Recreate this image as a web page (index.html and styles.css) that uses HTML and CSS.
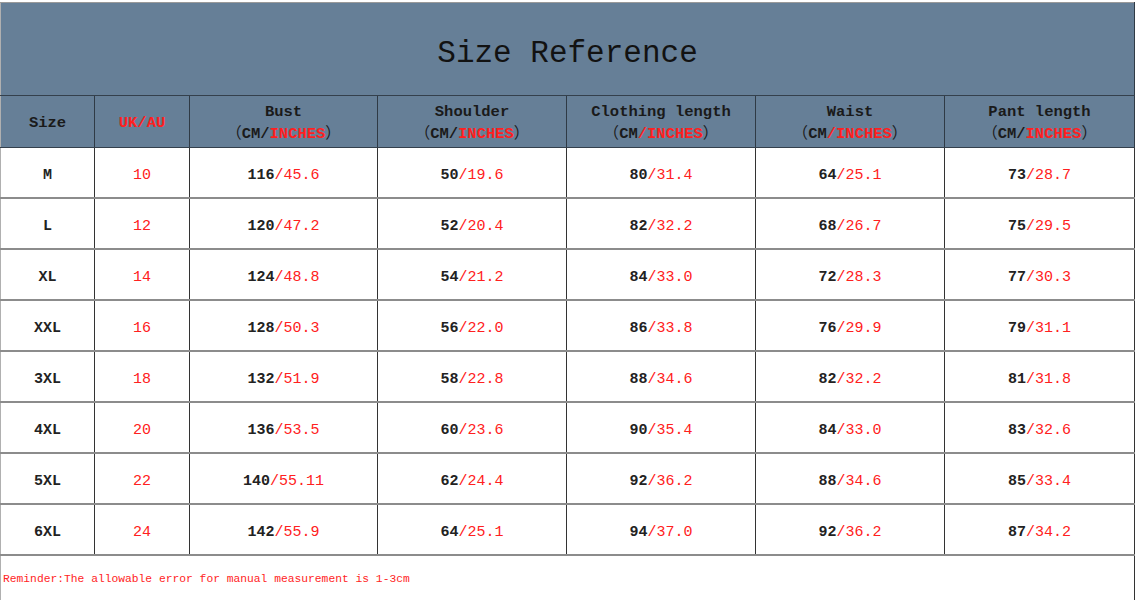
FILE: index.html
```html
<!DOCTYPE html>
<html lang="en">
<head>
<meta charset="utf-8">
<title>Size Reference</title>
<link rel="stylesheet" href="styles.css">
</head>
<body>
<div class="sheet">
<table class="chart">
  <colgroup>
    <col class="c-size"><col class="c-uk"><col class="c-bust"><col class="c-sh"><col class="c-cl"><col class="c-wa"><col class="c-pa">
  </colgroup>
  <thead>
    <tr class="title-row"><th colspan="7" class="title">Size Reference</th></tr>
    <tr class="head-row">
      <th class="dark">Size</th>
      <th class="red">UK/AU</th>
      <th><span class="dark">Bust</span><br><span class="fw">（</span><span class="dark">CM/</span><span class="red">INCHES</span><span class="fw">）</span></th>
      <th><span class="dark">Shoulder</span><br><span class="fw">（</span><span class="dark">CM/</span><span class="red">INCHES</span><span class="fw">）</span></th>
      <th><span class="dark">Clothing length</span><br><span class="fw">（</span><span class="dark">CM</span><span class="red">/INCHES</span><span class="fw">）</span></th>
      <th><span class="dark">Waist</span><br><span class="fw">（</span><span class="dark">CM</span><span class="red">/INCHES</span><span class="fw">）</span></th>
      <th><span class="dark">Pant length</span><br><span class="fw">（</span><span class="dark">CM/</span><span class="red">INCHES</span><span class="fw">）</span></th>
    </tr>
  </thead>
  <tbody>
    <tr><td class="sz">M</td><td class="uk">10</td><td><b>116</b><i>/45.6</i></td><td><b>50</b><i>/19.6</i></td><td><b>80</b><i>/31.4</i></td><td><b>64</b><i>/25.1</i></td><td><b>73</b><i>/28.7</i></td></tr>
    <tr><td class="sz">L</td><td class="uk">12</td><td><b>120</b><i>/47.2</i></td><td><b>52</b><i>/20.4</i></td><td><b>82</b><i>/32.2</i></td><td><b>68</b><i>/26.7</i></td><td><b>75</b><i>/29.5</i></td></tr>
    <tr><td class="sz">XL</td><td class="uk">14</td><td><b>124</b><i>/48.8</i></td><td><b>54</b><i>/21.2</i></td><td><b>84</b><i>/33.0</i></td><td><b>72</b><i>/28.3</i></td><td><b>77</b><i>/30.3</i></td></tr>
    <tr><td class="sz">XXL</td><td class="uk">16</td><td><b>128</b><i>/50.3</i></td><td><b>56</b><i>/22.0</i></td><td><b>86</b><i>/33.8</i></td><td><b>76</b><i>/29.9</i></td><td><b>79</b><i>/31.1</i></td></tr>
    <tr><td class="sz">3XL</td><td class="uk">18</td><td><b>132</b><i>/51.9</i></td><td><b>58</b><i>/22.8</i></td><td><b>88</b><i>/34.6</i></td><td><b>82</b><i>/32.2</i></td><td><b>81</b><i>/31.8</i></td></tr>
    <tr><td class="sz">4XL</td><td class="uk">20</td><td><b>136</b><i>/53.5</i></td><td><b>60</b><i>/23.6</i></td><td><b>90</b><i>/35.4</i></td><td><b>84</b><i>/33.0</i></td><td><b>83</b><i>/32.6</i></td></tr>
    <tr><td class="sz">5XL</td><td class="uk">22</td><td><b>140</b><i>/55.11</i></td><td><b>62</b><i>/24.4</i></td><td><b>92</b><i>/36.2</i></td><td><b>88</b><i>/34.6</i></td><td><b>85</b><i>/33.4</i></td></tr>
    <tr><td class="sz">6XL</td><td class="uk">24</td><td><b>142</b><i>/55.9</i></td><td><b>64</b><i>/25.1</i></td><td><b>94</b><i>/37.0</i></td><td><b>92</b><i>/36.2</i></td><td><b>87</b><i>/34.2</i></td></tr>
    <tr class="note-row"><td colspan="7" class="note">Reminder:The allowable error for manual measurement is 1-3cm</td></tr>
  </tbody>
</table>
</div>
</body>
</html>
```

FILE: styles.css
```css
html, body {
  margin: 0;
  padding: 0;
  background: #ffffff;
}

.sheet {
  padding-top: 2px;
  width: 1136px;
}

.chart {
  width: 1135px;
  table-layout: fixed;
  border-collapse: collapse;
  border-left: 1px solid #b0b0b0;
  border-right: 1px solid #a8a8a8;
  border-top: 1px solid #9a9a9a;
  font-family: "Liberation Mono", "Noto Sans CJK SC", monospace;
  color: #1e1e1e;
}

.c-size { width: 94px; }
.c-uk { width: 95px; }
.c-bust { width: 188px; }
.c-sh { width: 189px; }
.c-cl { width: 189px; }
.c-wa { width: 189px; }
.c-pa { width: 190px; }

th, td {
  padding: 0;
  text-align: center;
  vertical-align: middle;
  border-right: 1px solid #333333;
  border-bottom: 2px solid #8c8c8c;
}

thead th {
  background: #667f97;
  border-bottom: 1px solid #34404c;
  border-right: 1px solid #2f3a45;
}

.title-row th {
  height: 84px;
  padding-top: 8px;
  font-size: 31px;
  font-weight: normal;
  color: #121212;
}

.head-row th {
  height: 48px;
  padding-top: 3px;
  font-size: 15.5px;
  font-weight: bold;
  line-height: 19px;
}

.dark { color: #1a1a1a; }
.red { color: #ff1f1f; }

.fw {
  font-family: "Noto Sans CJK SC", sans-serif;
  font-weight: normal;
  color: #1a1a1a;
}

tbody td {
  height: 44px;
  padding-top: 5px;
  font-size: 15px;
}

tbody b {
  font-weight: bold;
  color: #222222;
}

tbody i {
  font-style: normal;
  font-weight: normal;
  color: #ff2020;
}

td.sz {
  font-weight: bold;
  color: #222222;
}

td.uk {
  color: #ff2020;
}

.note-row td {
  height: 42px;
  padding-top: 2px;
  text-align: left;
  padding-left: 2px;
  font-size: 11.3px;
  color: #ff2424;
  border-bottom: none;
}
```
